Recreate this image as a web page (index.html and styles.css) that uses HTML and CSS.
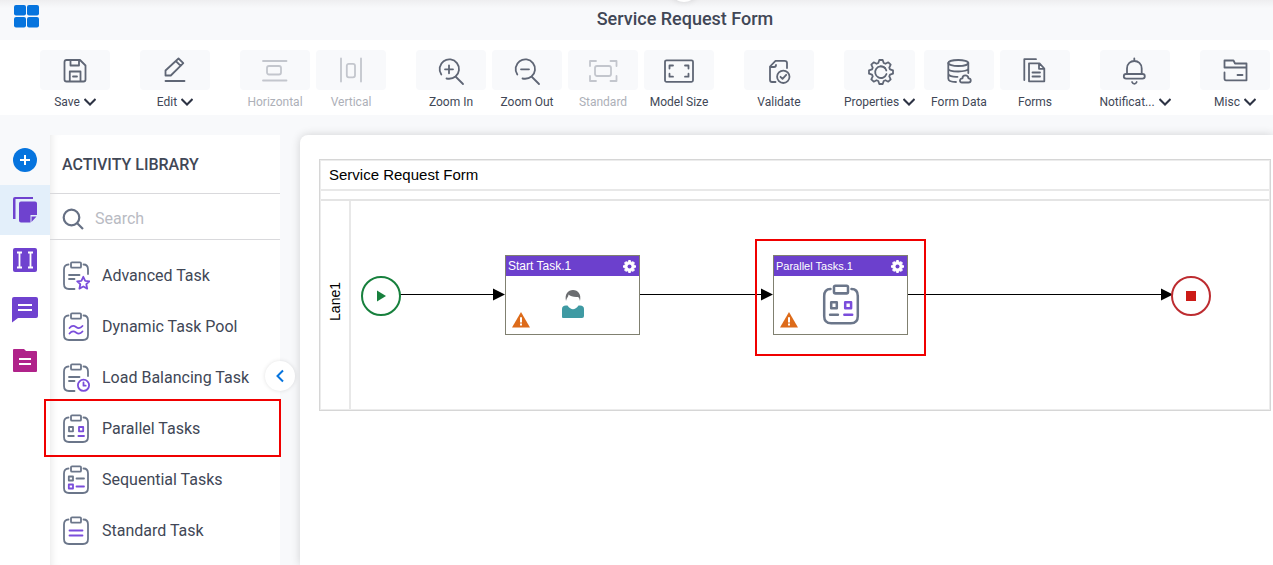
FILE: index.html
```html
<!DOCTYPE html>
<html lang="en">

<head>
    <meta charset="UTF-8">
    <meta name="viewport" content="width=device-width, initial-scale=1.0">
    <title>Service Request Form</title>
    <link rel="stylesheet" href="styles.css">
</head>

<body>

    <!-- Shared icon shapes -->
    <svg class="symbols" aria-hidden="true">
        <symbol id="chevron" viewBox="0 0 12 8">
            <path d="M0.5 1 6 6.5 11.5 1" />
        </symbol>
        <symbol id="gear" viewBox="-13 -13 26 26">
            <path d="M-2.7-9 -1.7-12H1.7L2.7-9 4.45-8.27 7.28-9.69 9.69-7.28 8.27-4.45 9-2.7 12-1.7V1.7L9 2.7 8.27 4.45 9.69 7.28 7.28 9.69 4.45 8.27 2.7 9 1.7 12H-1.7L-2.7 9 -4.45 8.27 -7.28 9.69 -9.69 7.28 -8.27 4.45 -9 2.7 -12 1.7V-1.7L-9-2.7 -8.27-4.45 -9.69-7.28 -7.28-9.69 -4.45-8.27Z" />
        </symbol>
        <symbol id="clip" viewBox="0 0 28 30">
            <rect x="9" y="1.3" width="10" height="5.4" rx="1" />
            <path d="M6.5 3.5C3.5 3.5 2 5.5 2 8.5V23Q2 28 7 28H21Q26 28 26 23V8.5C26 5.5 24.5 3.5 21.5 3.5" />
        </symbol>
        <symbol id="clip-open" viewBox="0 0 28 30">
            <rect x="9" y="1.3" width="10" height="5.4" rx="1" />
            <path d="M6.5 3.5C3.5 3.5 2 5.5 2 8.5V23Q2 28 7 28H12.5M26 13V8.5C26 5.500 24.5 3.5 21.5 3.5M7 14H17.5M7 18H12.5" />
        </symbol>
        <symbol id="parallel" viewBox="0 0 28 30">
            <use href="#clip" />
            <path d="M7 13H11V17.3H7ZM6.2 22H11.8" />
            <path class="accent" d="M17 13H21.2V17.3H17ZM16.4 22H22" />
        </symbol>
        <symbol id="warning" viewBox="0 0 18 16">
            <path fill="#dd6b1a" d="M9 0 18 15.5H0Z" />
            <path fill="#fff" d="M8 5.2H10V10.5H8ZM8 11.6H10V13.6H8Z" />
        </symbol>
    </svg>

    <header class="topbar">
        <button class="apps" aria-label="Apps">
            <svg width="26" height="24" viewBox="0 0 26 24" fill="#0674de">
                <rect x="0" y="1" width="12" height="10.5" rx="2" />
                <rect x="13" y="1" width="12" height="10.5" rx="2" />
                <rect x="0" y="13" width="12" height="10.5" rx="2" />
                <rect x="13" y="13" width="12" height="10.5" rx="2" />
            </svg>
        </button>
        <h1>Service Request Form</h1>
        <span class="notch"></span>
    </header>

    <nav class="toolbar">
        <div class="group">
            <button class="tool">
                <span class="tile"><svg viewBox="0 0 28 28"><path d="M5.5 4H19L24.5 9.5V23.5Q24.5 25.5 22.500 25.5H5.5Q3.5 25.5 3.5 23.5V6Q3.5 4 5.5 4ZM9.5 4V9.5H18V4M8.8 25.5V15.5H19.5V25.5M12 20.5H16" /></svg></span>
                <span class="label">Save <svg class="chevron"><use href="#chevron" /></svg></span>
            </button>
        </div>
        <div class="group">
            <button class="tool">
                <span class="tile"><svg viewBox="0 0 28 28"><path d="M4.5 19.5V14.500L17.5 2.5L22.3 7.2L9.8 19.5ZM14.8 5L19.7 9.8" /><path d="M4.5 25H23.5" /></svg></span>
                <span class="label">Edit <svg class="chevron"><use href="#chevron" /></svg></span>
            </button>
        </div>
        <div class="group">
            <button class="tool" disabled>
                <span class="tile"><svg viewBox="0 0 28 28"><path d="M2 5H25.5M2 24.5H25.5" /><rect x="6" y="10" width="14" height="8.5" rx="2" /></svg></span>
                <span class="label">Horizontal</span>
            </button>
            <button class="tool" disabled>
                <span class="tile"><svg viewBox="0 0 28 28"><path d="M4 2.5V25.5M24 2.5V25.5" /><rect x="9.8" y="7.8" width="8.2" height="13.5" rx="2" /></svg></span>
                <span class="label">Vertical</span>
            </button>
        </div>
        <div class="group">
            <button class="tool">
                <span class="tile"><svg viewBox="0 0 28 28"><path d="M4.300 18.5A9.7 9.7 0 1 1 18.5 20.500Q15 23.500 9.500 22.500M18.5 20.5L26 28M8 13.3H16M12 9.3V17.3" /></svg></span>
                <span class="label">Zoom In</span>
            </button>
            <button class="tool">
                <span class="tile"><svg viewBox="0 0 28 28"><path d="M4.300 18.5A9.7 9.7 0 1 1 18.5 20.500Q15 23.500 9.500 22.500M18.5 20.5L26 28M8 13.3H16" /></svg></span>
                <span class="label">Zoom Out</span>
            </button>
            <button class="tool" disabled>
                <span class="tile"><svg viewBox="0 0 28 28"><path d="M1 10V5H7M21.5 5H27.5V10M27.5 20V25H21.5M7 25H1V20" /><rect x="6" y="10" width="16" height="10" rx="2" /></svg></span>
                <span class="label">Standard</span>
            </button>
            <button class="tool">
                <span class="tile"><svg viewBox="0 0 28 28"><rect x="0" y="4.3" width="28" height="21.5" rx="1.5" /><path d="M4.5 12.5V9.5H8M20 9.5H23.5V12.5M23.5 17.7V20.7H20M8 20.7H4.5V17.7" /></svg></span>
                <span class="label">Model Size</span>
            </button>
        </div>
        <div class="group">
            <button class="tool">
                <span class="tile"><svg viewBox="0 0 28 28"><path d="M10.5 26H7Q5 26 5 24V10.5L10.5 4.8H19.5Q22 4.8 22 7V12M5 11H9Q11 11 11 9" /><circle cx="18.3" cy="20.8" r="6.2" /><path d="M15.5 20.8 17.5 22.8 21.2 18.8" /></svg></span>
                <span class="label">Validate</span>
            </button>
        </div>
        <div class="group">
            <button class="tool tool-spaced">
                <span class="tile"><svg viewBox="0 0 28 28"><use href="#gear" x="2" y="3" width="26" height="26" /><path d="M19 12A5.8 5.800 0 1 0 20.5 18" /><path d="M14.5 10.300A5.8 5.8 0 0 1 20.300 14.500" /></svg></span>
                <span class="label">Properties <svg class="chevron"><use href="#chevron" /></svg></span>
            </button>
            <button class="tool">
                <span class="tile"><svg viewBox="0 0 28 28"><ellipse cx="13.3" cy="7" rx="10" ry="3" /><path d="M3.3 7V22.5C3.3 25 7 26 11 26M23.3 7V17M3.3 12.5C3.3 16.5 23.3 16.5 23.3 12.5M3.3 17.5C3.3 20 7.5 21 12.5 20.8M17 26.5H23.500C26.5 26.5 26.5 22.500 23.5 22.3C23 18.5 17.5 18.5 17.5 22.3C14.5 22.3 14 26.5 17 26.5Z" /></svg></span>
                <span class="label">Form Data</span>
            </button>
            <button class="tool">
                <span class="tile"><svg viewBox="0 0 28 28"><path d="M3.3 24V3.2H15M8 7.3H18.5L23.3 12.5V25.3H8ZM18 7.5V12.8H23M11.5 16.500H19M11.5 20.5H19" /></svg></span>
                <span class="label">Forms</span>
            </button>
        </div>
        <div class="group">
            <button class="tool">
                <span class="tile"><svg viewBox="0 0 28 28"><path d="M13.3 2.5V5M6 18V12.5C6 2.5 20.7 2.5 20.7 12.5V18M11 26C12 28.500 14.7 28.5 15.7 26" /><rect x="2.8" y="18" width="21" height="4.6" rx="2.3" /></svg></span>
                <span class="label">Notificat... <svg class="chevron"><use href="#chevron" /></svg></span>
            </button>
        </div>
        <div class="group">
            <button class="tool">
                <span class="tile"><svg viewBox="0 0 28 28"><path d="M3.5 11.5V4.5H12.5L14 7.5H25.5V24.3H5Q3.5 24.3 3.5 22.5V16.5M3.5 11.5H25.5M16.5 19H21.5" /></svg></span>
                <span class="label">Misc <svg class="chevron"><use href="#chevron" /></svg></span>
            </button>
        </div>
    </nav>

    <main class="workspace">
        <nav class="rail">
            <button aria-label="Add">
                <svg width="24" height="24" viewBox="0 0 24 24"><circle cx="12" cy="12" r="12" fill="#0674de" /><path d="M12 7V17M7 12H17" stroke="#fff" stroke-width="2" /></svg>
            </button>
            <button class="active" aria-label="Activity library">
                <svg width="24" height="26" viewBox="0 0 24 26" fill="#6f42cf"><path d="M0 2Q0 0 2 0H20V2H2.5V22H0Z" /><path d="M8 4.5H22Q24 4.5 24 6.5V18H17.5V25.5H8Q6 25.5 6 23.5V6.5Q6 4.5 8 4.5ZM18.5 19.5H23.5L18.5 25Z" /></svg>
            </button>
            <button aria-label="Lanes">
                <svg width="24" height="24" viewBox="0 0 24 24"><rect width="24" height="24" rx="2" fill="#6f42cf" /><path d="M6.5 5V19M4 4.5H9M4 19.5H9M17.5 5V19M15 4.5H20M15 19.5H20" fill="none" stroke="#fff" stroke-width="1.8" /></svg>
            </button>
            <button aria-label="Notes">
                <svg width="26" height="26" viewBox="0 0 26 26"><path d="M2 0H24Q26 0 26 2V19Q26 21 24 21H6L0 25.5V2Q0 0 2 0Z" fill="#6f42cf" /><path d="M6 8H20M6 13H20" stroke="#fff" stroke-width="2" /></svg>
            </button>
            <button aria-label="Forms">
                <svg width="24" height="24" viewBox="0 0 24 24"><path d="M1 1H11L13 3H23Q24 3 24 4V23Q24 24 23 24H1Q0 24 0 23V2Q0 1 1 1Z" fill="#b0238a" /><path d="M6 11H18M6 16H18" stroke="#fff" stroke-width="2" /></svg>
            </button>
        </nav>

        <aside class="panel">
            <h2>Activity Library</h2>
            <div class="search">
                <label for="search">
                    <svg width="22" height="22" viewBox="0 0 22 22" role="img" aria-label="Search activities"><circle cx="9.5" cy="9.5" r="7.8" /><path d="M15 15 21 21" /></svg>
                </label>
                <input id="search" type="text" placeholder="Search">
            </div>
            <ul class="activities">
                <li><button>
                    <svg viewBox="0 0 28 30"><use href="#clip-open" /><path class="accent" d="M21.3 15.8 23.2 19.8 27.4 20.3 24.3 23.2 25.2 27.6 21.3 25.5 17.4 27.6 18.3 23.2 15.2 20.3 19.4 19.8Z" /></svg>
                    Advanced Task
                </button></li>
                <li><button>
                    <svg viewBox="0 0 28 30"><use href="#clip" /><path class="accent" d="M7.5 16C10 13 12 13.5 14 15S18 17 20.5 14M7.5 21.5C10 18.5 12 19 14 20.5S18 22.5 20.5 19.5" /></svg>
                    Dynamic Task Pool
                </button></li>
                <li><button>
                    <svg viewBox="0 0 28 30"><use href="#clip-open" /><circle class="accent" cx="21.5" cy="22.3" r="5.6" /><path class="accent" d="M21.5 19.5V22.7H23.7" /></svg>
                    Load Balancing Task
                </button></li>
                <li><button>
                    <svg viewBox="0 0 28 30"><use href="#parallel" /></svg>
                    Parallel Tasks
                </button><span class="highlight"></span></li>
                <li><button>
                    <svg viewBox="0 0 28 30"><use href="#clip" /><path d="M6.8 11.5H11V15.5H6.8ZM14.500 13.5H22" /><path class="accent" d="M6.8 19.5H11V23.5H6.8ZM14.5 21.5H22" /></svg>
                    Sequential Tasks
                </button></li>
                <li><button>
                    <svg viewBox="0 0 28 30"><use href="#clip" /><path class="accent" d="M7.5 14.5H20.5M7.5 19.5H20.5" /></svg>
                    Standard Task
                </button></li>
            </ul>
            <button class="collapse" aria-label="Collapse panel">
                <svg width="8" height="14" viewBox="0 0 8 14"><path d="M7 1.5 1.5 7 7 12.5" /></svg>
            </button>
        </aside>

        <section class="canvas">
            <div class="pool">
                <div class="pool-title">Service Request Form</div>
                <div class="pool-gap"></div>
                <div class="lane">
                    <div class="lane-name"><span>Lane1</span></div>
                    <div class="lane-body">
                        <svg class="links">
                            <path d="M49 93.5H144M289 93.5H412M557 93.5H811" stroke="#000" />
                            <path d="M142 87.5 154 93.5 142 99.5ZM410 87.5 422 93.5 410 99.5ZM810 87.5 822 93.5 810 99.5Z" />
                        </svg>
                        <div class="event start">
                            <svg width="10" height="12" viewBox="0 0 10 12"><path d="M1 0.5 10 6 1 11.5Z" fill="#17803d" /></svg>
                        </div>
                        <div class="node first">
                            <div class="node-head">Start Task.1 <svg class="node-gear" viewBox="-13 -13 26 26"><use href="#gear" x="-13" y="-13" width="26" height="26" /><circle r="4" /></svg></div>
                            <svg class="person" viewBox="0 0 22 28">
                                <path d="M0 27V19Q0 15.5 4 15.5H5.5Q11 23 16.5 15.5H18Q22 15.5 22 19V26Q22 28 20 28H1Q0 28 0 27Z" fill="#3f9aa3" />
                                <path d="M4 11C2.5 4 6 0 11 0S19.5 4 18 11C17.5 8.5 17 7.5 16 7C12 7.5 8 6 6.5 4.5C6.5 7 4.5 8 4 11Z" fill="#6b6d70" />
                            </svg>
                            <svg class="warning"><use href="#warning" /></svg>
                        </div>
                        <div class="node second">
                            <div class="node-head node-head-small">Parallel Tasks.1 <svg class="node-gear" viewBox="-13 -13 26 26"><use href="#gear" x="-13" y="-13" width="26" height="26" /><circle r="4" /></svg></div>
                            <svg class="task-icon" viewBox="0 0 28 30"><use href="#parallel" /></svg>
                            <svg class="warning"><use href="#warning" /></svg>
                        </div>
                        <span class="highlight node-highlight"></span>
                        <div class="event end"><span class="stop"></span></div>
                    </div>
                </div>
            </div>
        </section>
    </main>

</body>

</html>
```
FILE: styles.css
```css
/* General Reset */
* {
    margin: 0;
    padding: 0;
    box-sizing: border-box;
}

body {
    display: flex;
    flex-direction: column;
    min-height: 100vh;
    overflow: hidden;
    font-family: Roboto, 'Liberation Sans', sans-serif;
    background-color: #f8f9fb;
    color: #414756;
}

button {
    border: none;
    background: none;
    font: inherit;
    color: inherit;
    cursor: pointer;
}

svg {
    display: block;
    flex: none;
}

.symbols {
    position: absolute;
    width: 0;
    height: 0;
}

/* Top bar */
.topbar {
    position: relative;
    display: flex;
    align-items: flex-start;
    height: 40px;
    padding-left: 14px;
    background: linear-gradient(#eeeef0, #f8f9fb 8px);
}

.apps {
    width: 83px;
    height: 32px;
}

.topbar h1 {
    flex: 1;
    font-size: 18px;
    font-weight: 500;
    line-height: 38px;
    text-align: center;
}

.notch {
    position: absolute;
    top: -28px;
    left: calc(50% + 32px);
    width: 30px;
    height: 30px;
    border-radius: 50%;
    background: #fff;
    box-shadow: 0 0 6px rgba(0, 0, 0, 0.12);
}

/* Toolbar */
.toolbar {
    display: flex;
    gap: 30px;
    height: 75px;
    padding: 10px 0 0 40px;
    background: #fff;
}

.group {
    display: flex;
    gap: 6px;
}

.tool {
    display: flex;
    flex-direction: column;
    align-items: center;
    width: 70px;
    font-size: 12px;
}

.tool-spaced {
    width: 71px;
    margin-right: 3px;
}

.tool:disabled {
    color: #adb0b8;
    cursor: default;
}

.tile {
    display: flex;
    align-items: center;
    justify-content: center;
    width: 100%;
    height: 40px;
    border-radius: 4px;
    background: #f8f9fb;
}

.tile svg {
    width: 28px;
    height: 28px;
    overflow: visible;
    fill: none;
    stroke: #5f6675;
    stroke-width: 1.8;
    stroke-linejoin: round;
    stroke-linecap: round;
}

.tool:disabled .tile svg {
    stroke: #c3c6cd;
}

.label {
    display: flex;
    align-items: center;
    gap: 4px;
    height: 23px;
    white-space: nowrap;
}

.chevron {
    width: 12px;
    height: 8px;
    fill: none;
    stroke: #2d3344;
    stroke-width: 2;
}

/* Workspace */
.workspace {
    display: flex;
    flex: 1;
    padding-top: 20px;
}

.rail {
    width: 50px;
    background: linear-gradient(#f8f9fb 100px, #fff 100px);
}

.rail button {
    display: flex;
    align-items: center;
    justify-content: center;
    width: 50px;
    height: 50px;
}

.rail .active {
    background: #e3effa;
}

/* Activity panel */
.panel {
    position: relative;
    width: 230px;
    background: #fff;
    box-shadow: inset 8px 0 10px -8px rgba(0, 0, 0, 0.12);
}

.panel h2 {
    padding-left: 12px;
    border-bottom: 1px solid #d9d9dc;
    font-size: 16px;
    font-weight: 500;
    line-height: 60px;
    height: 59px;
    text-transform: uppercase;
}

.search {
    display: flex;
    align-items: center;
    gap: 11px;
    height: 46px;
    padding: 4px 12px 0;
    border-bottom: 1px solid #d9d9dc;
}

.search svg {
    fill: none;
    stroke: #667084;
    stroke-width: 2.2;
}

.search input {
    flex: 1;
    min-width: 0;
    border: none;
    outline: none;
    background: none;
    font: inherit;
    font-size: 16px;
}

.search input::placeholder {
    color: #b9bbc3;
}

.activities {
    padding-top: 10px;
    list-style: none;
}

.activities li {
    position: relative;
}

.activities button {
    display: flex;
    align-items: center;
    gap: 12px;
    width: 100%;
    height: 51px;
    padding-left: 12px;
    font-size: 16px;
}

.activities svg,
.task-icon {
    width: 28px;
    height: 30px;
    fill: none;
    stroke: #6b768a;
    stroke-width: 1.8;
    stroke-linecap: round;
    stroke-linejoin: round;
}

.accent {
    stroke: #7a4ddb;
}

.highlight {
    position: absolute;
    top: -4px;
    right: -1px;
    bottom: -3px;
    left: -6px;
    border: 2px solid #f00000;
    pointer-events: none;
}

.collapse {
    position: absolute;
    top: 226px;
    right: -15px;
    display: flex;
    align-items: center;
    justify-content: center;
    width: 30px;
    height: 30px;
    border-radius: 50%;
    background: #fff;
    box-shadow: 0 0 4px rgba(0, 0, 0, 0.12);
}

.collapse svg {
    fill: none;
    stroke: #0674de;
    stroke-width: 2;
}

/* Canvas */
.canvas {
    flex: 1;
    margin-left: 20px;
    padding: 24px 2px 0 19px;
    border-radius: 8px 0 0 0;
    background: #fff;
    box-shadow: 0 0 10px rgba(0, 0, 0, 0.16);
}

.pool {
    border: 1px solid #d6d6d6;
    outline: 1px solid #ececec;
    outline-offset: -2px;
    font-family: 'Liberation Sans', Arial, sans-serif;
    color: #000;
}

.pool-title {
    height: 31px;
    padding-left: 9px;
    border-bottom: 2px solid #e8e8e8;
    font-size: 15px;
    line-height: 30px;
}

.pool-gap {
    height: 10px;
    border-bottom: 2px solid #e4e4e4;
}

.lane {
    display: flex;
    height: 209px;
}

.lane-name {
    display: flex;
    align-items: center;
    justify-content: center;
    width: 31px;
    padding-bottom: 8px;
    border-right: 2px solid #e8e8e8;
    font-size: 14px;
}

.lane-name span {
    writing-mode: vertical-rl;
    transform: rotate(180deg);
}

.lane-body {
    position: relative;
    flex: 1;
}

.links {
    position: absolute;
    width: 100%;
    height: 100%;
}

.event {
    position: absolute;
    top: 75px;
    display: flex;
    align-items: center;
    justify-content: center;
    width: 40px;
    height: 40px;
    border: 2px solid #17803d;
    border-radius: 50%;
}

.start {
    left: 10px;
}

.end {
    left: 820px;
    border-color: #bd2c30;
}

.stop {
    width: 10px;
    height: 10px;
    background: #cc1b17;
}

.node {
    position: absolute;
    top: 54px;
    display: flex;
    flex-direction: column;
    align-items: center;
    width: 135px;
    height: 80px;
    border: 1px solid #808070;
    background: #fff;
}

.first {
    left: 154px;
}

.second {
    left: 422px;
}

.node-head {
    display: flex;
    align-items: center;
    justify-content: space-between;
    width: 100%;
    height: 20px;
    padding: 0 3px 0 2px;
    background: #6c40cd;
    font-size: 12px;
    color: #fff;
}

.node-head-small {
    font-size: 11px;
}

.node-gear {
    width: 13px;
    height: 13px;
    fill: #fff;
    stroke: #fff;
    stroke-width: 2;
}

.node-gear circle {
    fill: #6c40cd;
    stroke: none;
}

.person {
    width: 22px;
    height: 28px;
    margin-top: 14px;
}

.task-icon {
    width: 42px;
    height: 42px;
    margin-top: 8px;
}

.warning {
    position: absolute;
    left: 6px;
    bottom: 6px;
    width: 18px;
    height: 16px;
}

.node-highlight {
    top: 38px;
    right: auto;
    bottom: auto;
    left: 404px;
    width: 171px;
    height: 117px;
}
```
